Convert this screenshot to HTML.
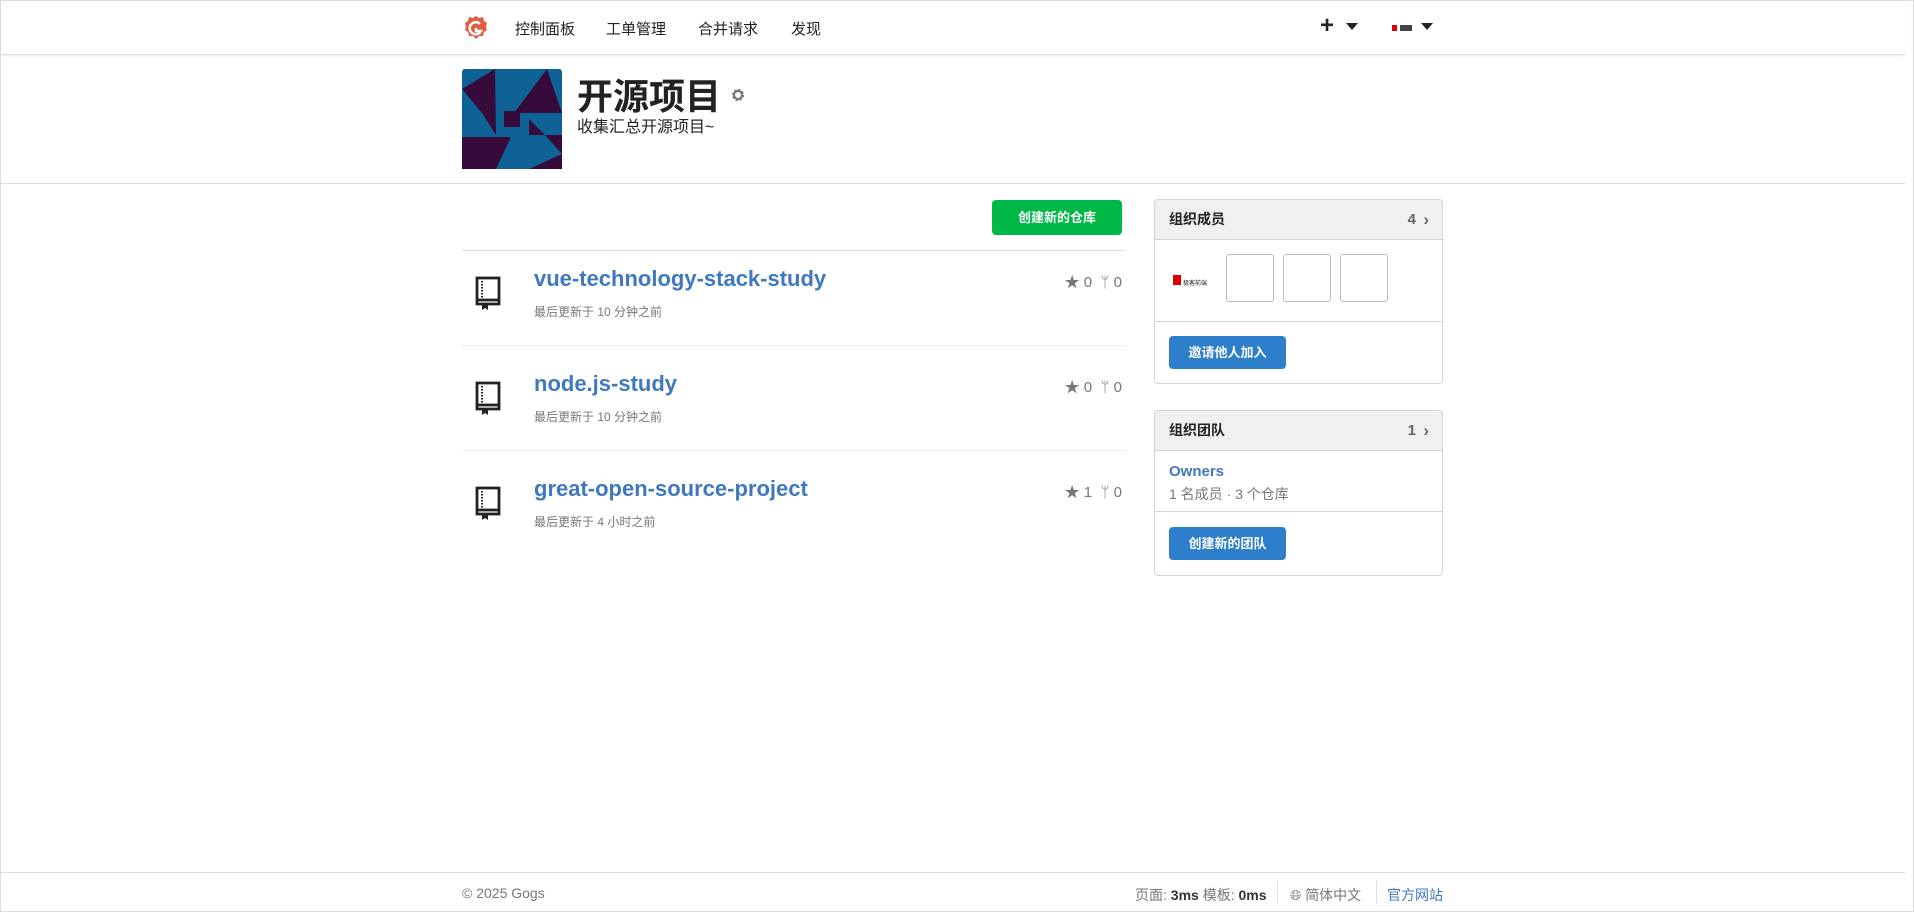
<!DOCTYPE html>
<html><head><meta charset="utf-8"><style>
*{box-sizing:border-box;margin:0;padding:0}
body{width:1914px;height:912px;overflow:hidden;background:#fff;font-family:"Liberation Sans","Noto Sans CJK SC",sans-serif;color:#333;position:relative;border:1px solid #ddd}
.abs{position:absolute}
.nav{position:absolute;left:0;top:0;width:1904px;height:54px;border-bottom:1px solid #ddd;box-shadow:0 1px 2px rgba(0,0,0,.08)}
.nav span{position:absolute;top:17px;font-size:15px;color:#222}
.hdr{position:absolute;left:0;top:182px;width:1904px;border-top:1px solid #ddd}
.btn{position:absolute;color:#fff;font-weight:bold;font-size:13px;text-align:center;border-radius:4px}
.card{position:absolute;left:1153px;width:289px;border:1px solid #d4d4d5;border-radius:4px;overflow:hidden}
.ch{height:40px;line-height:39px;background:#f0f0f0;border-bottom:1px solid #d4d4d5;font-weight:bold;font-size:14px;padding:0 14px;color:#222;position:relative}
.ch b{position:absolute;right:26px;top:0;color:#666;font-size:15px}
.ch i{position:absolute;right:13px;top:0;color:#666;font-style:normal;font-size:17px;font-weight:bold}
.row{position:absolute;left:461px;width:664px}
.title{position:absolute;left:72px;font-size:22px;font-weight:bold;color:#4078c0}
.meta{position:absolute;left:72px;font-size:12px;color:#777}
.stat{position:absolute;right:4px;font-size:15px;color:#777}
.sep{position:absolute;left:461px;width:664px;border-top:1px solid #eee}
.bx{position:absolute;width:48px;height:48px;border:1px solid #bbb;border-radius:3px}
</style></head><body>
<div class="nav">
<svg class="abs" style="left:462px;top:14px" width="26" height="26" viewBox="0 0 26 26"><path d="M13 1l3 2 4-1 1 4 3 2-1 4 1 3-3 2-1 4-4 0-3 3-3-3-4 0-1-4-3-2 1-3-1-4 3-2 1-4 4 1z" fill="#e05d44"/><path d="M17 9a6 6 0 1 0 1 7h-5v-3" stroke="#fff" stroke-width="2.5" fill="none"/></svg>
<span style="left:514px">控制面板</span><span style="left:605px">工单管理</span><span style="left:697px">合并请求</span><span style="left:790px">发现</span>
<span style="left:1319px;top:11px;font-size:24px;font-weight:bold">+</span>
<svg class="abs" style="left:1345px;top:22px" width="12" height="8"><path d="M0 0h12L6 7z" fill="#222"/></svg>
<div class="abs" style="left:1391px;top:24px;width:20px;height:6px;background:linear-gradient(90deg,#d00 0 5px,#fff 5px 8px,#444 8px 20px)"></div>
<svg class="abs" style="left:1420px;top:22px" width="12" height="8"><path d="M0 0h12L6 7z" fill="#222"/></svg>
</div>

<svg class="abs" style="left:461px;top:68px" width="100" height="100" viewBox="0 0 100 100"><rect width="100" height="100" rx="3" fill="#0f6296"/><g fill="#360a3a">
<path d="M0 20L33 0 34 66 20 44z"/>
<path d="M85 0L100 44H52z"/>
<rect x="42" y="42" width="16" height="16"/>
<path d="M67 50L83 66H67z"/>
<path d="M100 85L83 66 100 66 100 100 67 100z"/>
<path d="M0 68H49L34 100H0z"/>
</g></svg>
<div class="abs" style="left:576px;top:67px;font-size:36px;font-weight:bold;color:#222">开源项目</div>
<svg class="abs" style="left:730px;top:87px" width="14" height="14" viewBox="0 0 14 14"><circle cx="7" cy="7" r="4.5" fill="none" stroke="#777" stroke-width="3" stroke-dasharray="2.2 1.3"/><circle cx="7" cy="7" r="4" fill="none" stroke="#777" stroke-width="2"/></svg>
<div class="abs" style="left:576px;top:112px;font-size:16px;color:#222">收集汇总开源项目~</div>
<div class="hdr"></div>

<div class="btn" style="left:991px;top:199px;width:130px;height:35px;line-height:35px;background:#00b846">创建新的仓库</div>
<div class="sep" style="top:249px;border-color:#ddd"></div>
<div class="sep" style="top:344px"></div>
<div class="sep" style="top:449px"></div>

<div class="row" style="top:265px">
<svg class="abs" style="left:13px;top:10px" width="26" height="34" viewBox="0 0 26 34"><path d="M2 2h22v22H2z M2 24v4h22v-4" fill="none" stroke="#222" stroke-width="2.8"/><path d="M7 5v17" stroke="#222" stroke-width="2" stroke-dasharray="1.5 1.5"/><path d="M7 27v7l3-2 3 2v-7z" fill="#222"/></svg>
<div class="title" style="top:0">vue-technology-stack-study</div>
<div class="meta" style="top:37px">最后更新于 10 分钟之前</div>
<div class="stat" style="top:5px">★ 0 &nbsp;ᛘ 0</div></div>

<div class="row" style="top:370px">
<svg class="abs" style="left:13px;top:10px" width="26" height="34" viewBox="0 0 26 34"><path d="M2 2h22v22H2z M2 24v4h22v-4" fill="none" stroke="#222" stroke-width="2.8"/><path d="M7 5v17" stroke="#222" stroke-width="2" stroke-dasharray="1.5 1.5"/><path d="M7 27v7l3-2 3 2v-7z" fill="#222"/></svg>
<div class="title" style="top:0">node.js-study</div>
<div class="meta" style="top:37px">最后更新于 10 分钟之前</div>
<div class="stat" style="top:5px">★ 0 &nbsp;ᛘ 0</div></div>

<div class="row" style="top:475px">
<svg class="abs" style="left:13px;top:10px" width="26" height="34" viewBox="0 0 26 34"><path d="M2 2h22v22H2z M2 24v4h22v-4" fill="none" stroke="#222" stroke-width="2.8"/><path d="M7 5v17" stroke="#222" stroke-width="2" stroke-dasharray="1.5 1.5"/><path d="M7 27v7l3-2 3 2v-7z" fill="#222"/></svg>
<div class="title" style="top:0">great-open-source-project</div>
<div class="meta" style="top:37px">最后更新于 4 小时之前</div>
<div class="stat" style="top:5px">★ 1 &nbsp;ᛘ 0</div></div>

<div class="card" style="top:198px;height:185px">
<div class="ch">组织成员<b>4</b><i>›</i></div>
<div class="abs" style="left:18px;top:75px;width:8px;height:10px;background:#d00"></div>
<div class="abs" style="left:28px;top:78px;font-size:6px;color:#222">极客前端</div>
<div class="bx" style="left:71px;top:54px"></div><div class="bx" style="left:128px;top:54px"></div><div class="bx" style="left:185px;top:54px"></div>
<div class="abs" style="left:0;top:121px;width:100%;border-top:1px solid #d4d4d5"></div>
<div class="btn" style="left:14px;top:136px;width:117px;height:33px;line-height:33px;background:#2d7ecb">邀请他人加入</div>
</div>

<div class="card" style="top:409px;height:166px">
<div class="ch">组织团队<b>1</b><i>›</i></div>
<div class="abs" style="left:14px;top:52px;font-size:15px;font-weight:bold;color:#4078c0">Owners</div>
<div class="abs" style="left:14px;top:73px;font-size:14px;color:#777">1 名成员 · 3 个仓库</div>
<div class="abs" style="left:0;top:100px;width:100%;border-top:1px solid #d4d4d5"></div>
<div class="btn" style="left:14px;top:116px;width:117px;height:33px;line-height:33px;background:#2d7ecb">创建新的团队</div>
</div>

<div class="abs" style="left:0;top:871px;width:1904px;border-top:1px solid #ddd"></div>
<div class="abs" style="left:461px;top:884px;font-size:14px;color:#777">© 2025 Gogs</div>
<div class="abs" style="left:1134px;top:884px;font-size:14px;color:#777">页面: <b style="color:#333">3ms</b> 模板: <b style="color:#333">0ms</b></div>
<div class="abs" style="left:1276px;top:880px;height:22px;border-left:1px solid #ddd"></div>
<div class="abs" style="left:1289px;top:884px;font-size:14px;color:#777">🌐︎ 简体中文</div>
<div class="abs" style="left:1375px;top:880px;height:22px;border-left:1px solid #ddd"></div>
<div class="abs" style="left:1386px;top:884px;font-size:14px;color:#4078c0">官方网站</div>
</body></html>
